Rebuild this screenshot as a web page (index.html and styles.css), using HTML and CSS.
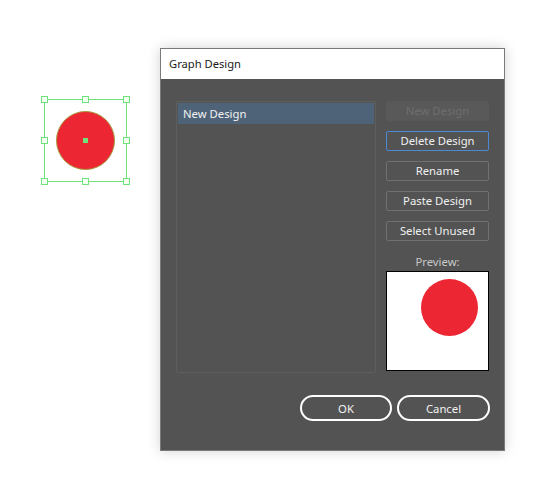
FILE: index.html
```html
<!DOCTYPE html>
<html>
<head>
<meta charset="utf-8">
<link rel="stylesheet" href="styles.css">
</head>
<body>
<div class="artwork">
  <div class="bbox">
    <span class="h h-tl"></span><span class="h h-tc"></span><span class="h h-tr"></span>
    <span class="h h-ml"></span><span class="h h-mr"></span>
    <span class="h h-bl"></span><span class="h h-bc"></span><span class="h h-br"></span>
    <div class="art-circle"><span class="center-pt"></span></div>
  </div>
</div>

<div class="dialog">
  <div class="titlebar">Graph Design</div>
  <div class="dialog-body">
    <div class="main">
      <div class="list">
        <div class="list-item selected">New Design</div>
      </div>
      <div class="side">
        <button class="btn disabled">New Design</button>
        <button class="btn focused">Delete Design</button>
        <button class="btn">Rename</button>
        <button class="btn">Paste Design</button>
        <button class="btn">Select Unused</button>
        <div class="preview-label">Preview:</div>
        <div class="preview"><div class="preview-dot"></div></div>
      </div>
    </div>
    <div class="footer">
      <button class="pill">OK</button>
      <button class="pill">Cancel</button>
    </div>
  </div>
</div>
</body>
</html>
```

FILE: styles.css
```css
html, body {
  margin: 0;
  padding: 0;
  background: #ffffff;
  width: 534px;
  height: 493px;
  overflow: hidden;
  font-family: "Noto Sans", "Liberation Sans", sans-serif;
}

/* artwork on the canvas */
.artwork {
  position: absolute;
  left: 44px;
  top: 99px;
}
.bbox {
  position: relative;
  width: 81px;
  height: 81px;
  border: 1px solid #6fe37a;
}
.h {
  position: absolute;
  width: 5px;
  height: 5px;
  background: #f4fff4;
  border: 1px solid #6fe37a;
}
.h-tl { left: -4px; top: -4px; }
.h-tc { left: 37px; top: -4px; }
.h-tr { right: -4px; top: -4px; }
.h-ml { left: -4px; top: 37px; }
.h-mr { right: -4px; top: 37px; }
.h-bl { left: -4px; bottom: -4px; }
.h-bc { left: 37px; bottom: -4px; }
.h-br { right: -4px; bottom: -4px; }
.art-circle {
  position: absolute;
  left: 11px;
  top: 11px;
  width: 57px;
  height: 57px;
  border-radius: 50%;
  background: #ed2633;
  border: 1px solid #a59a3e;
  display: flex;
  align-items: center;
  justify-content: center;
}
.center-pt {
  width: 5px;
  height: 5px;
  background: #6fe37a;
}

/* dialog window */
.dialog {
  position: absolute;
  left: 160px;
  top: 48px;
  width: 343px;
  height: 401px;
  border: 1px solid #7a7a7a;
  background: #535353;
  box-shadow: 0 0 12px rgba(0, 0, 0, 0.18);
  display: flex;
  flex-direction: column;
}
.titlebar {
  height: 30px;
  background: #ffffff;
  color: #1a1a1a;
  font-size: 11.2px;
  line-height: 30px;
  padding-left: 8px;
}
.dialog-body {
  flex: 1;
  padding: 22px 14px 0 15px;
  display: flex;
  flex-direction: column;
}
.main {
  display: flex;
  gap: 10px;
}
.list {
  width: 196px;
  height: 268px;
  border: 1px solid #5e5e5e;
  border-radius: 2px;
  padding: 1px;
}
.list-item {
  height: 21px;
  line-height: 21px;
  padding-left: 5px;
  font-size: 11.3px;
  color: #f2f2f2;
}
.list-item.selected {
  background: #4e6278;
}
.side {
  width: 103px;
  display: flex;
  flex-direction: column;
}
.btn {
  height: 20px;
  margin: 0 0 10px 0;
  padding: 0;
  border: 1px solid #707070;
  border-radius: 2px;
  background: #535353;
  color: #f0f0f0;
  font-family: inherit;
  font-size: 11.3px;
  line-height: 18px;
}
.btn.disabled {
  background: #595959;
  border-color: #595959;
  color: #6e6e6e;
}
.btn.focused {
  border-color: #4b8ad3;
}
.preview-label {
  margin-top: 2px;
  height: 18px;
  text-align: center;
  font-size: 11.3px;
  color: #c8c8c8;
  line-height: 18px;
}
.preview {
  width: 101px;
  height: 98px;
  background: #ffffff;
  border: 1px solid #000000;
  position: relative;
}
.preview-dot {
  position: absolute;
  left: 34px;
  top: 7px;
  width: 57px;
  height: 57px;
  border-radius: 50%;
  background: #ed2633;
}
.footer {
  margin-top: 22px;
  display: flex;
  justify-content: flex-end;
  gap: 5px;
}
.pill {
  height: 26px;
  border: 2px solid #ffffff;
  border-radius: 13px;
  background: #535353;
  color: #f2f2f2;
  font-family: inherit;
  font-size: 11.3px;
  padding: 0;
}
.pill:first-child { width: 92px; }
.pill:last-child { width: 93px; }
```
